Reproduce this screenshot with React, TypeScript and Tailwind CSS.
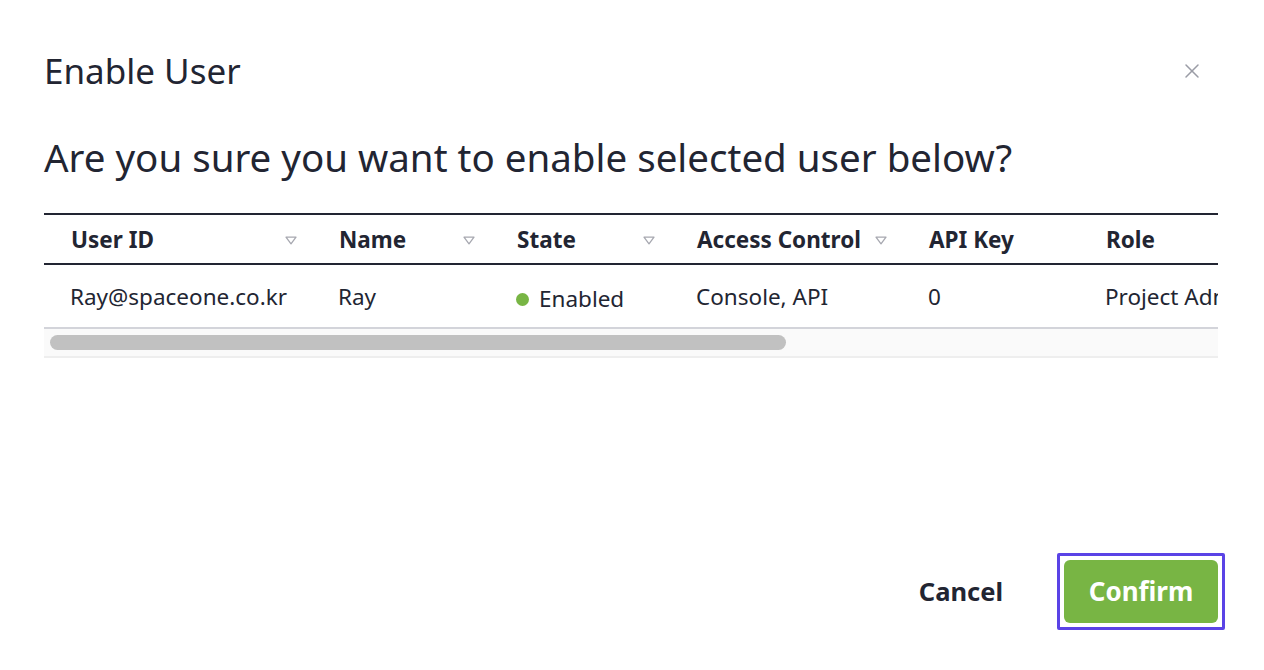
import { X } from 'lucide-react'

const columns = [
  { label: 'User ID', width: 'w-[268px]', sort: true },
  { label: 'Name', width: 'w-[178px]', sort: true },
  { label: 'State', width: 'w-[180px]', sort: true },
  { label: 'Access Control', width: 'w-[232px]', sort: true },
  { label: 'API Key', width: 'w-[177px]', sort: false },
  { label: 'Role', width: 'w-[240px]', sort: false },
]

function SortIcon() {
  return (
    <svg width="12" height="9" viewBox="0 0 12 9" className="shrink-0">
      <path d="M1 1.2 L11 1.2 L6 7.8 Z" fill="none" stroke="#a7a8b0" strokeWidth="1.3" strokeLinejoin="round" />
    </svg>
  )
}

export default function App() {
  return (
    <div
      className="w-[1264px] h-[670px] bg-white text-[#222532] flex flex-col pl-[44px]"
      style={{ fontFamily: '"Noto Sans", "Open Sans", sans-serif' }}
    >
      {/* header */}
      <div className="flex items-center justify-between pt-[47px] pr-[60px]">
        <h1 className="text-[35px] leading-[48px] font-normal">Enable User</h1>
        <button className="text-[#9a9ca6]">
          <X className="w-[24px] h-[24px]" strokeWidth={1.5} />
        </button>
      </div>

      <p className="mt-[36px] text-[38.5px] leading-[52px]">
        Are you sure you want to enable selected user below?
      </p>

      {/* table */}
      <div className="mt-[30px] w-[1174px] overflow-hidden">
        <div className="w-max">
          <div className="flex h-[52px] border-y-2 border-[#222532] items-center pt-[2px]">
            {columns.map((c) => (
              <div key={c.label} className={`${c.width} flex items-center justify-between pl-[27px] pr-[15px]`}>
                <span className="text-[22.5px] font-bold">{c.label}</span>
                {c.sort && <SortIcon />}
              </div>
            ))}
          </div>
          <div className="flex h-[62px] items-center text-[22.5px] pt-[2px]">
            <div className="w-[268px] pl-[26px]">Ray@spaceone.co.kr</div>
            <div className="w-[178px] pl-[26px]">Ray</div>
            <div className="w-[180px] pl-[26px] flex items-center gap-[10px] pt-[4px]">
              <span className="w-[13px] h-[13px] rounded-full bg-[#78b544]" />
              <span>Enabled</span>
            </div>
            <div className="w-[232px] pl-[26px]">Console, API</div>
            <div className="w-[177px] pl-[26px]">0</div>
            <div className="w-[240px] pl-[26px] whitespace-nowrap">Project Admin</div>
          </div>
        </div>
        {/* scrollbar */}
        <div className="h-[31px] bg-[#fafafa] border-t-2 border-[#d3d4da] border-b-2 border-b-[#eeeeee] flex items-center pl-[6px]">
          <div className="w-[736px] h-[15px] rounded-full bg-[#c1c1c1]" />
        </div>
      </div>

      {/* footer */}
      <div className="mt-auto mb-[40px] pr-[39px] flex items-center justify-end gap-[54px]">
        <button className="text-[25.5px] font-bold text-[#222532]">Cancel</button>
        <div className="p-[4px] border-[3px] border-[#5a43e6] rounded-[2px]">
          <button className="w-[154px] h-[63px] rounded-[6px] bg-[#78b544] text-white text-[26px] font-bold">
            Confirm
          </button>
        </div>
      </div>
    </div>
  )
}
